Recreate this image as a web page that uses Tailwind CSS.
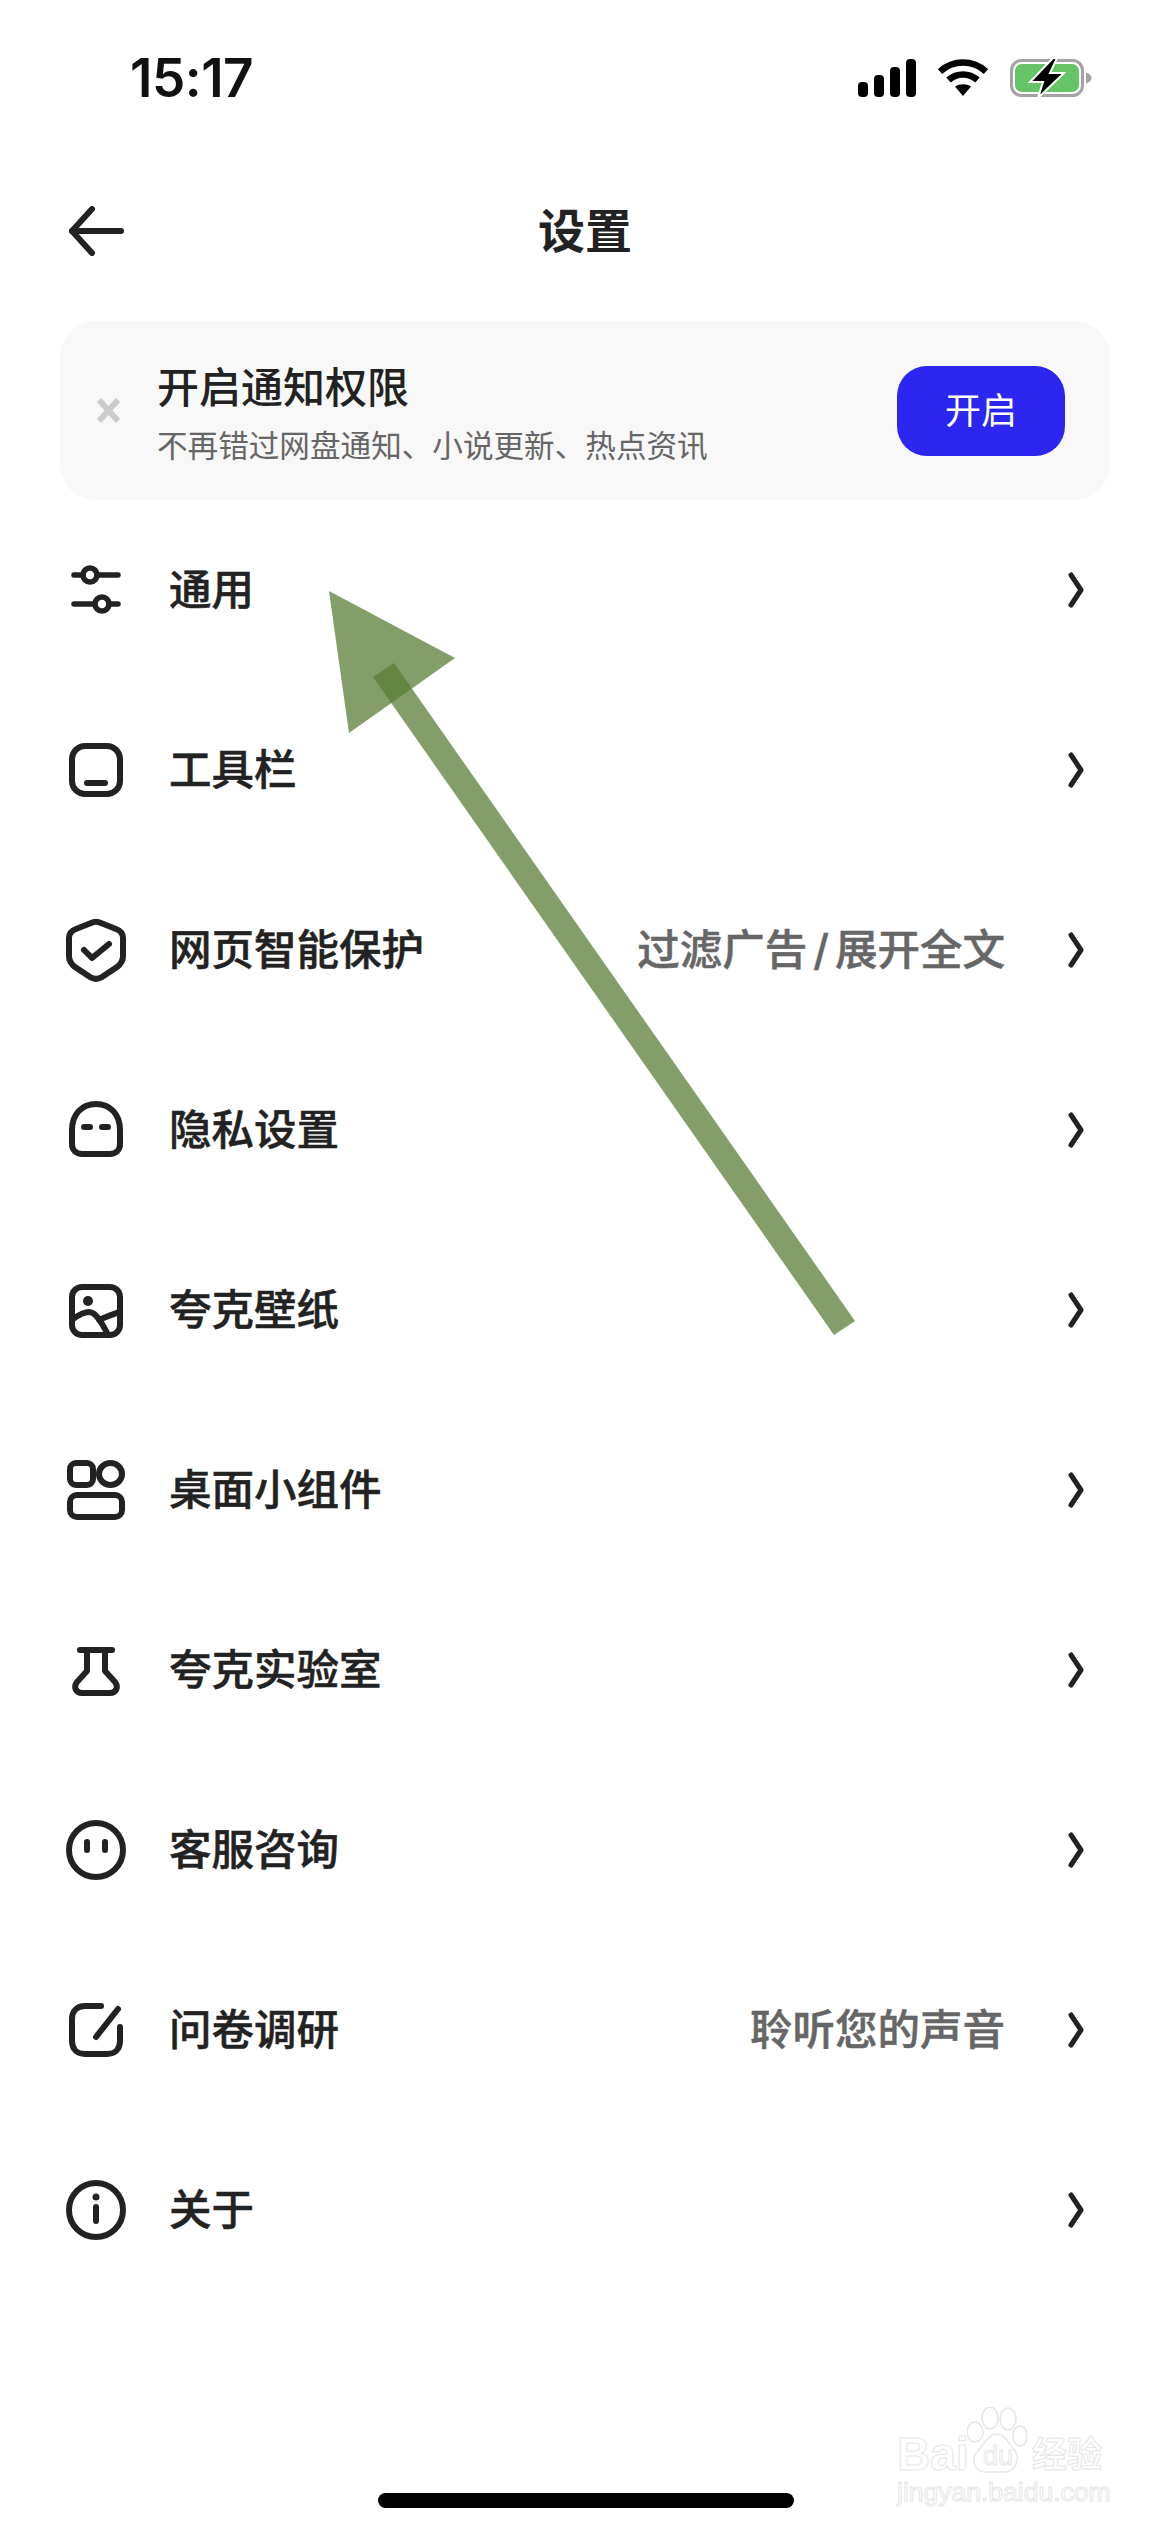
<!DOCTYPE html>
<html lang="zh-CN">
<head>
    <meta charset="UTF-8">
    <meta name="viewport" content="width=device-width, initial-scale=1.0">
    <title>设置</title>
    <script src="https://cdn.jsdelivr.net/npm/@tailwindcss/browser@4"></script>
</head>
<body class="bg-white">
    <div class="relative w-[1170px] h-[2532px] overflow-hidden bg-white text-[#222222] font-['Inter','Noto_Sans_CJK_SC',sans-serif]">

        <!-- Status bar -->
        <div class="h-[156px] flex items-start justify-between pt-[50px] pl-[130px] pr-[78px]">
            <span class="text-[53px] leading-[56px] font-semibold text-[#111] tracking-[-0.5px]">15:17</span>
            <div class="flex items-center gap-[22px] h-[56px]">
                <svg width="58" height="38" viewBox="0 0 58 38" fill="#000">
                    <rect x="0" y="23" width="10" height="15" rx="4"/>
                    <rect x="16" y="16" width="10" height="22" rx="4"/>
                    <rect x="32" y="8" width="10" height="30" rx="4"/>
                    <rect x="48" y="0" width="10" height="38" rx="4"/>
                </svg>
                <svg width="50" height="38" viewBox="0 0 50 38" fill="none">
                    <path d="M2 12.5C15 0.5 35 0.5 48 12.5" stroke="#000" stroke-width="6.5"/>
                    <path d="M10.5 21C19 13.5 31 13.5 39.5 21" stroke="#000" stroke-width="6.5"/>
                    <path d="M17 27.5C21.5 24.5 28.5 24.5 33 27.5L25 37Z" fill="#000"/>
                </svg>
                <svg width="82" height="40" viewBox="0 0 82 40" fill="none">
                    <rect x="1.5" y="2.5" width="71" height="35" rx="10" stroke="#a3a3a3" stroke-width="3"/>
                    <rect x="5" y="6" width="64" height="28" rx="7" fill="#65c466"/>
                    <path d="M76 14.5C79.500 15.500 81.500 17.500 81.500 20C81.500 22.500 79.500 24.500 76 25.500Z" fill="#a3a3a3"/>
                    <path d="M43 0L20 24H33L28 40L54 15H40L47 0Z" fill="#000" stroke="#fff" stroke-width="2"/>
                </svg>
            </div>
        </div>

        <!-- Header -->
        <header class="relative h-[150px] flex items-center justify-center">
            <svg class="absolute left-[68px] top-[50px]" width="56" height="50" viewBox="0 0 56 50" fill="none" stroke="#222" stroke-width="6" stroke-linecap="round" stroke-linejoin="round">
                <path d="M24 3L4 25L24 47"/>
                <path d="M4 25H53"/>
            </svg>
            <h1 class="text-[47px] leading-[60px] font-semibold">设置</h1>
        </header>

        <!-- Notification card -->
        <div class="mx-[60px] mt-[15px] h-[179px] rounded-[36px] bg-[#f8f8f8] flex items-center pl-[36px] pr-[45px]">
            <span class="w-[25px] h-[25px] shrink-0">
                <svg width="25" height="25" viewBox="0 0 25 25" fill="none" stroke="#cccccc" stroke-width="6"><path d="M3 2L22 23M22 2L3 23"/></svg>
            </span>
            <div class="ml-[36px] flex-1 pt-[6px]">
                <p class="text-[42px] leading-[50px] font-medium">开启通知权限</p>
                <p class="mt-[14px] text-[30.600px] leading-[38px] text-[#666666]">不再错过网盘通知、小说更新、热点资讯</p>
            </div>
            <button class="w-[168px] h-[90px] rounded-[30px] bg-[#2b26f0] text-white text-[36px] leading-[44px]">开启</button>
        </div>

        <!-- Settings list -->
        <ul>
            <li class="h-[180px] flex items-center pl-[60px] pr-[86px] text-[42.500px] font-medium [-webkit-text-stroke:0.5px_currentColor]">
                <span class="w-[72px] h-[72px] shrink-0">
                    <svg width="72" height="72" viewBox="0 0 72 72" fill="none" stroke="#222" stroke-width="5.500" stroke-linecap="round">
                        <path d="M14 21H23M37 21H58"/><circle cx="30" cy="21" r="7"/>
                        <path d="M14 50H35M49 50H58"/><circle cx="42" cy="50" r="7"/>
                    </svg>
                </span>
                <span class="ml-[37px] flex-1">通用</span>
                <svg class="ml-[61px]" width="18" height="40" viewBox="0 0 18 40" fill="none" stroke="#222" stroke-width="5" stroke-linecap="round" stroke-linejoin="round"><path d="M5 5L15 20L5 35"/></svg>
            </li>
            <li class="h-[180px] flex items-center pl-[60px] pr-[86px] text-[42.500px] font-medium [-webkit-text-stroke:0.5px_currentColor]">
                <span class="w-[72px] h-[72px] shrink-0">
                    <svg width="72" height="72" viewBox="0 0 72 72" fill="none" stroke="#222" stroke-width="6" stroke-linecap="round">
                        <rect x="12" y="12" width="48" height="48" rx="13"/>
                        <path d="M27 49H45"/>
                    </svg>
                </span>
                <span class="ml-[37px] flex-1">工具栏</span>
                <svg class="ml-[61px]" width="18" height="40" viewBox="0 0 18 40" fill="none" stroke="#222" stroke-width="5" stroke-linecap="round" stroke-linejoin="round"><path d="M5 5L15 20L5 35"/></svg>
            </li>
            <li class="h-[180px] flex items-center pl-[60px] pr-[86px] text-[42.500px] font-medium [-webkit-text-stroke:0.5px_currentColor]">
                <span class="w-[72px] h-[72px] shrink-0">
                    <svg width="72" height="72" viewBox="0 0 72 72" fill="none" stroke="#222" stroke-width="6" stroke-linecap="round" stroke-linejoin="round">
                        <path d="M31 9C34 7.500 38 7.500 41 9L56 15C60 16.500 63 19 63 24V42C63 47 61 50 57 53L42 63C38 65.500 34 65.500 30 63L15 53C11 50 9 47 9 42V24C9 19 12 16.500 16 15Z"/>
                        <path d="M24 36L32 44L49 30"/>
                    </svg>
                </span>
                <span class="ml-[37px] flex-1">网页智能保护</span>
                <span class="text-[#666666]">过滤广告<span class="mx-[6px]">/</span>展开全文</span>
                <svg class="ml-[61px]" width="18" height="40" viewBox="0 0 18 40" fill="none" stroke="#222" stroke-width="5" stroke-linecap="round" stroke-linejoin="round"><path d="M5 5L15 20L5 35"/></svg>
            </li>
            <li class="h-[180px] flex items-center pl-[60px] pr-[86px] text-[42.500px] font-medium [-webkit-text-stroke:0.5px_currentColor]">
                <span class="w-[72px] h-[72px] shrink-0">
                    <svg width="72" height="72" viewBox="0 0 72 72" fill="none" stroke="#222" stroke-width="6" stroke-linecap="round">
                        <path d="M12 36C12 20 22 10 36 10C50 10 60 20 60 36V50C60 56 56 60 50 60H22C16 60 12 56 12 50Z"/>
                        <path d="M24 33H30M42 33H48"/>
                    </svg>
                </span>
                <span class="ml-[37px] flex-1">隐私设置</span>
                <svg class="ml-[61px]" width="18" height="40" viewBox="0 0 18 40" fill="none" stroke="#222" stroke-width="5" stroke-linecap="round" stroke-linejoin="round"><path d="M5 5L15 20L5 35"/></svg>
            </li>
            <li class="h-[180px] flex items-center pl-[60px] pr-[86px] text-[42.500px] font-medium [-webkit-text-stroke:0.5px_currentColor]">
                <span class="w-[72px] h-[72px] shrink-0">
                    <svg width="72" height="72" viewBox="0 0 72 72" fill="none" stroke="#222" stroke-width="6" stroke-linecap="round">
                        <rect x="12" y="13" width="48" height="48" rx="10"/>
                        <circle cx="28" cy="27" r="5" fill="#222" stroke="none"/>
                        <path d="M13 45C20 40 24 38 29 38C34 38 37 42 40 47C43 51 45 55 47 59M39 46C45 43 52 41 59 38"/>
                    </svg>
                </span>
                <span class="ml-[37px] flex-1">夸克壁纸</span>
                <svg class="ml-[61px]" width="18" height="40" viewBox="0 0 18 40" fill="none" stroke="#222" stroke-width="5" stroke-linecap="round" stroke-linejoin="round"><path d="M5 5L15 20L5 35"/></svg>
            </li>
            <li class="h-[180px] flex items-center pl-[60px] pr-[86px] text-[42.500px] font-medium [-webkit-text-stroke:0.5px_currentColor]">
                <span class="w-[72px] h-[72px] shrink-0">
                    <svg width="72" height="72" viewBox="0 0 72 72" fill="none" stroke="#222" stroke-width="6">
                        <rect x="10" y="9" width="23" height="22" rx="6"/>
                        <ellipse cx="50.500" cy="20" rx="11.500" ry="11"/>
                        <rect x="10" y="41" width="52" height="22" rx="7"/>
                    </svg>
                </span>
                <span class="ml-[37px] flex-1">桌面小组件</span>
                <svg class="ml-[61px]" width="18" height="40" viewBox="0 0 18 40" fill="none" stroke="#222" stroke-width="5" stroke-linecap="round" stroke-linejoin="round"><path d="M5 5L15 20L5 35"/></svg>
            </li>
            <li class="h-[180px] flex items-center pl-[60px] pr-[86px] text-[42.500px] font-medium [-webkit-text-stroke:0.5px_currentColor]">
                <span class="w-[72px] h-[72px] shrink-0">
                    <svg width="72" height="72" viewBox="0 0 72 72" fill="none" stroke="#222" stroke-width="6" stroke-linecap="round" stroke-linejoin="round">
                        <path d="M20 16H52"/>
                        <path d="M27 16V37L17 48C13 53 16 59 22 59H50C56 59 59 53 55 48L45 37V16"/>
                    </svg>
                </span>
                <span class="ml-[37px] flex-1">夸克实验室</span>
                <svg class="ml-[61px]" width="18" height="40" viewBox="0 0 18 40" fill="none" stroke="#222" stroke-width="5" stroke-linecap="round" stroke-linejoin="round"><path d="M5 5L15 20L5 35"/></svg>
            </li>
            <li class="h-[180px] flex items-center pl-[60px] pr-[86px] text-[42.500px] font-medium [-webkit-text-stroke:0.5px_currentColor]">
                <span class="w-[72px] h-[72px] shrink-0">
                    <svg width="72" height="72" viewBox="0 0 72 72" fill="none" stroke="#222" stroke-width="6" stroke-linecap="round">
                        <circle cx="36" cy="36" r="27"/>
                        <path d="M27 28V36M45 28V36"/>
                    </svg>
                </span>
                <span class="ml-[37px] flex-1">客服咨询</span>
                <svg class="ml-[61px]" width="18" height="40" viewBox="0 0 18 40" fill="none" stroke="#222" stroke-width="5" stroke-linecap="round" stroke-linejoin="round"><path d="M5 5L15 20L5 35"/></svg>
            </li>
            <li class="h-[180px] flex items-center pl-[60px] pr-[86px] text-[42.500px] font-medium [-webkit-text-stroke:0.5px_currentColor]">
                <span class="w-[72px] h-[72px] shrink-0">
                    <svg width="72" height="72" viewBox="0 0 72 72" fill="none" stroke="#222" stroke-width="6" stroke-linecap="round">
                        <path d="M41 12H25C17 12 12 17 12 25V47C12 55 17 60 25 60H47C55 60 60 55 60 47V33"/>
                        <path d="M58 15L36 43"/>
                    </svg>
                </span>
                <span class="ml-[37px] flex-1">问卷调研</span>
                <span class="text-[#666666]">聆听您的声音</span>
                <svg class="ml-[61px]" width="18" height="40" viewBox="0 0 18 40" fill="none" stroke="#222" stroke-width="5" stroke-linecap="round" stroke-linejoin="round"><path d="M5 5L15 20L5 35"/></svg>
            </li>
            <li class="h-[180px] flex items-center pl-[60px] pr-[86px] text-[42.500px] font-medium [-webkit-text-stroke:0.5px_currentColor]">
                <span class="w-[72px] h-[72px] shrink-0">
                    <svg width="72" height="72" viewBox="0 0 72 72" fill="none" stroke="#222" stroke-width="6" stroke-linecap="round">
                        <circle cx="36" cy="36" r="27"/>
                        <path d="M36 33V47"/>
                        <circle cx="36" cy="23" r="3.500" fill="#222" stroke="none"/>
                    </svg>
                </span>
                <span class="ml-[37px] flex-1">关于</span>
                <svg class="ml-[61px]" width="18" height="40" viewBox="0 0 18 40" fill="none" stroke="#222" stroke-width="5" stroke-linecap="round" stroke-linejoin="round"><path d="M5 5L15 20L5 35"/></svg>
            </li>
        </ul>

        <!-- Annotation arrow drawn over the screenshot -->
        <svg class="absolute left-0 top-0 pointer-events-none" width="1170" height="2532" viewBox="0 0 1170 2532">
            <polygon points="329,591 455,658 349,733" fill="#5a7d36" fill-opacity="0.75"/>
            <polygon points="394,663 373,677 834,1335 855,1321" fill="#5a7d36" fill-opacity="0.75"/>
        </svg>

        <!-- Home indicator -->
        <div class="absolute left-[378px] top-[2493px] w-[416px] h-[15px] rounded-full bg-black"></div>

        <!-- Watermark -->
        <div class="absolute left-[897px] top-[2405px] w-[215px] h-[105px] font-['Liberation_Sans','Noto_Sans_CJK_SC',sans-serif] text-transparent [-webkit-text-stroke:1px_#e6e6e6]">
            <span class="absolute left-0 top-[24px] text-[46px] leading-[50px] font-bold">Bai</span>
            <svg class="absolute left-[70px] top-[2px]" width="62" height="70" viewBox="0 0 62 70" fill="none" stroke="#e6e6e6" stroke-width="1.500">
                <ellipse cx="8" cy="25" rx="8" ry="10"/>
                <ellipse cx="23" cy="11" rx="8" ry="11"/>
                <ellipse cx="41" cy="12" rx="8" ry="11"/>
                <ellipse cx="53" cy="29" rx="7" ry="10"/>
                <path d="M30 27C38 27 42 37 48 44C54 52 48 66 36 65H20C8 66 3 52 10 45C17 38 21 27 30 27Z"/>
            </svg>
            <span class="absolute left-[86px] top-[36px] text-[27px] leading-[30px]">du</span>
            <span class="absolute left-[135px] top-[29px] text-[35px] leading-[42px] font-bold">经验</span>
            <span class="absolute left-0 top-[72px] text-[26.500px] leading-[30px] whitespace-nowrap">jingyan.baidu.com</span>
        </div>
    </div>
</body>
</html>
